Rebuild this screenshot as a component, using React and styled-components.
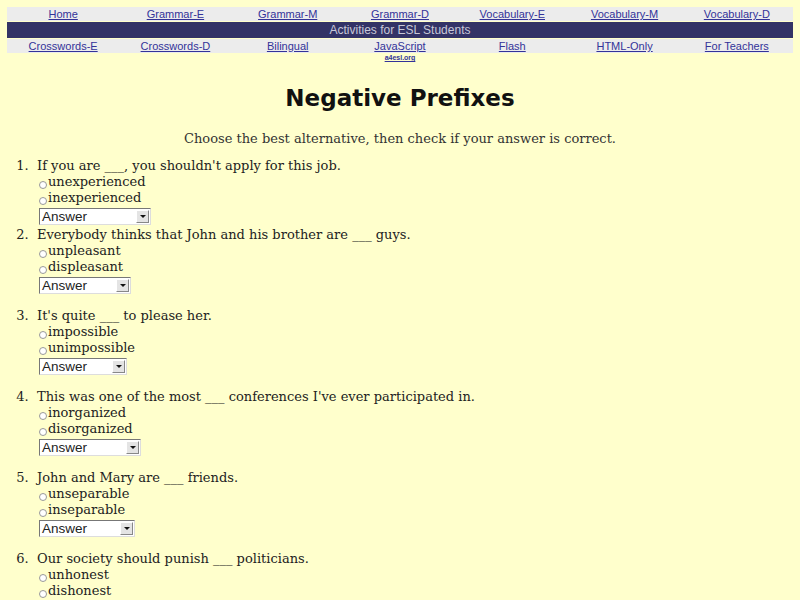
import React from 'react';
import styled, { createGlobalStyle } from 'styled-components';

const Global = createGlobalStyle`
    html, body {
        background-color: #ffffcc;
    }
    body {
        margin: 7px;
        font-family: "DejaVu Serif", "Liberation Serif", serif;
        color: #222;
    }
`;

const NavTable = styled.div`
    width: 100%;
    display: flex;
    flex-direction: column;
    gap: 1px;
`;

const NavRow = styled.div`
    display: grid;
    grid-template-columns: repeat(7, 1fr);
    background-color: #ececec;
    height: 14px;
    align-items: center;
`;

const NavLink = styled.a`
    font-family: "Liberation Sans", Arial, sans-serif;
    font-size: 11px;
    color: #333399;
    text-decoration: underline;
    text-align: center;
    line-height: 14px;
`;

const Banner = styled.div`
    background-color: #333366;
    color: #c8c8d8;
    font-family: "Liberation Sans", Arial, sans-serif;
    font-size: 12px;
    text-align: center;
    height: 16px;
    line-height: 16px;
`;

const SiteTag = styled.div`
    font-family: "Liberation Sans", Arial, sans-serif;
    font-size: 7px;
    font-weight: bold;
    color: #333399;
    text-decoration: underline;
    text-align: center;
    margin-top: 1px;
`;

const Title = styled.h1`
    font-family: "Comic Sans MS", "DejaVu Sans", sans-serif;
    font-size: 23px;
    font-weight: bold;
    text-align: center;
    color: #111;
    margin: 24px 0 0 0;
`;

const Lead = styled.p`
    font-size: 13px;
    text-align: center;
    color: #333;
    margin: 20px 0 12px 0;
`;

const List = styled.ol`
    margin: 0;
    padding-left: 30px;
    font-size: 13px;
    line-height: 16px;
`;

const Item = styled.li`
    margin-bottom: ${props => props.tight ? '2px' : '14px'};
    &::marker {
        content: counter(list-item) ".\\00a0\\00a0";
    }
`;

const Choice = styled.label`
    display: block;
    padding-left: 2px;
`;

const Radio = styled.span`
    display: inline-block;
    width: 6px;
    height: 6px;
    border: 1px solid #999;
    border-radius: 50%;
    background: #fff;
    margin-right: 1px;
    vertical-align: -3px;
`;

const Select = styled.div`
    display: flex;
    width: ${props => props.w}px;
    height: 17px;
    margin: 2px 0 0 2px;
    border: 1px solid;
    border-color: #777 #ddd #ddd #777;
    background: #fff;
    box-sizing: border-box;
`;

const SelectText = styled.span`
    flex: 1;
    font-family: "Liberation Sans", Arial, sans-serif;
    font-size: 13.5px;
    line-height: 15px;
    padding-left: 2px;
    color: #222;
`;

const SelectButton = styled.span`
    width: 11px;
    margin: 1px;
    background: #e4e4e4;
    border: 1px solid;
    border-color: #fff #888 #888 #fff;
    display: flex;
    align-items: center;
    justify-content: center;
    &::after {
        content: "";
        border-left: 3px solid transparent;
        border-right: 3px solid transparent;
        border-top: 3px solid #111;
    }
`;

const navTop = ['Home', 'Grammar-E', 'Grammar-M', 'Grammar-D', 'Vocabulary-E', 'Vocabulary-M', 'Vocabulary-D'];
const navBottom = ['Crosswords-E', 'Crosswords-D', 'Bilingual', 'JavaScript', 'Flash', 'HTML-Only', 'For Teachers'];

const questions = [
    { q: "If you are ___, you shouldn't apply for this job.", a: ['unexperienced', 'inexperienced'], w: 112, tight: true },
    { q: 'Everybody thinks that John and his brother are ___ guys.', a: ['unpleasant', 'displeasant'], w: 92 },
    { q: "It's quite ___ to please her.", a: ['impossible', 'unimpossible'], w: 88 },
    { q: "This was one of the most ___ conferences I've ever participated in.", a: ['inorganized', 'disorganized'], w: 102 },
    { q: 'John and Mary are ___ friends.', a: ['unseparable', 'inseparable'], w: 96 },
    { q: 'Our society should punish ___ politicians.', a: ['unhonest', 'dishonest'], w: 90 },
];

const App = () => {
    return (
        <>
            <Global />
            <NavTable>
                <NavRow>
                    {navTop.map(n => <NavLink key={n}>{n}</NavLink>)}
                </NavRow>
                <Banner>Activities for ESL Students</Banner>
                <NavRow>
                    {navBottom.map(n => <NavLink key={n}>{n}</NavLink>)}
                </NavRow>
            </NavTable>
            <SiteTag>a4esl.org</SiteTag>
            <Title>Negative Prefixes</Title>
            <Lead>Choose the best alternative, then check if your answer is correct.</Lead>
            <List>
                {questions.map((item, i) => (
                    <Item key={i} tight={item.tight}>
                        {item.q}
                        {item.a.map(c => (
                            <Choice key={c}><Radio />{c}</Choice>
                        ))}
                        <Select w={item.w}>
                            <SelectText>Answer</SelectText>
                            <SelectButton />
                        </Select>
                    </Item>
                ))}
            </List>
        </>
    );
};

export default App;
